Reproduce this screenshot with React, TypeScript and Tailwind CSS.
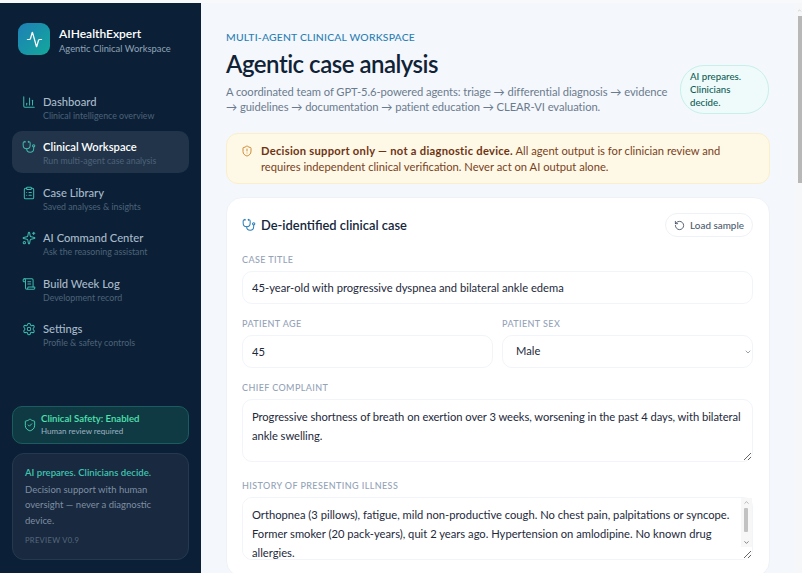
import React from "react";
import { Activity, BarChart3, Stethoscope, ClipboardList, Sparkles, ScrollText, Settings, ShieldCheck, ShieldAlert, RotateCcw, ChevronDown, ChevronUp } from "lucide-react";

const nav = [
  { icon: BarChart3, title: "Dashboard", sub: "Clinical intelligence overview" },
  { icon: Stethoscope, title: "Clinical Workspace", sub: "Run multi-agent case analysis", active: true },
  { icon: ClipboardList, title: "Case Library", sub: "Saved analyses & insights" },
  { icon: Sparkles, title: "AI Command Center", sub: "Ask the reasoning assistant" },
  { icon: ScrollText, title: "Build Week Log", sub: "Development record" },
  { icon: Settings, title: "Settings", sub: "Profile & safety controls" },
];

const labelCls = "block text-[9px] leading-[12px] tracking-[0.4px] uppercase font-medium text-[#94a3b8] mb-[5px]";
const fieldCls = "w-full bg-white border border-[#f1f5f9] rounded-[10px] px-[9px] text-[#1e293b] text-[11.2px] outline-none";

export default function App() {
  return (
    <div className="h-[573px] w-[802px] flex flex-col overflow-hidden bg-[#f4f7fb] font-['Lato','Noto_Sans',sans-serif]">
      <div className="h-[3px] bg-[#f8f9fa] shrink-0" />
      <div className="flex flex-1 min-h-0">
        <aside className="w-[201px] shrink-0 bg-[#0b2036] flex flex-col px-[12px] pb-[13px]">
          <div className="flex items-center gap-[9px] px-[6px] pt-[19px]">
            <div className="w-[32px] h-[32px] rounded-[9px] bg-gradient-to-br from-[#1f7fb5] to-[#14a89a] flex items-center justify-center">
              <Activity size={17} strokeWidth={1.75} className="text-white" />
            </div>
            <div className="pt-[4px]">
              <div className="text-white text-[12px] leading-[16px] font-semibold">AIHealthExpert</div>
              <div className="text-[#8fa3b8] text-[9.4px] leading-[14px] mt-[0px]">Agentic Clinical Workspace</div>
            </div>
          </div>
          <nav className="mt-[30px] flex flex-col gap-[3.4px]">
            {nav.map((n) => (
              <div key={n.title} className={`flex gap-[7px] rounded-[10px] pl-[10px] h-[42px] pt-[8px] ${n.active ? "bg-[#223449]" : ""}`}>
                <n.icon size={14} strokeWidth={1.75} className="text-[#3db8ac] mt-[1px] shrink-0" />
                <div>
                  <div className={`text-[11.2px] leading-[15px] ${n.active ? "text-white font-semibold" : "text-[#a9bacb] font-medium"}`}>{n.title}</div>
                  <div className="text-[8.8px] leading-[12px] mt-[1px] text-[#4d6379]">{n.sub}</div>
                </div>
              </div>
            ))}
          </nav>
          <div className="mt-auto flex flex-col gap-[9px]">
            <div className="h-[38px] rounded-[10px] border border-[#1a5c60] bg-[#0f3a44] flex items-center gap-[4px] px-[10px]">
              <ShieldCheck size={14} strokeWidth={1.6} className="text-[#4ad6b5] shrink-0" />
              <div>
                <div className="text-[9.6px] leading-[13px] font-semibold text-[#4fe3b0]">Clinical Safety: Enabled</div>
                <div className="text-[8px] leading-[11px] mt-[1px] text-[#9fb2c2]">Human review required</div>
              </div>
            </div>
            <div className="rounded-[12px] border border-[#24384f] bg-[#19293f] px-[12px] pt-[12px] pb-[13px]">
              <div className="text-[9.6px] leading-[14px] font-semibold text-[#3fc4b0]">AI prepares. Clinicians decide.</div>
              <div className="text-[9.5px] leading-[15.5px] mt-[2px] text-[#7d8fa3]">Decision support with human oversight — never a diagnostic device.</div>
              <div className="text-[7.6px] leading-[12px] mt-[6px] tracking-[0.3px] text-[#56687d]">PREVIEW V0.9</div>
            </div>
          </div>
        </aside>

        <div className="relative flex-1 min-w-0 overflow-hidden">
          <main className="pl-[25px] pr-[32px] pt-[27px]">
            <div className="flex items-end gap-[6px]">
              <div className="flex-1 min-w-0">
                <div className="text-[10.4px] leading-[15px] tracking-[0.2px] uppercase font-medium text-[#2b7fb5]">Multi-agent clinical workspace</div>
                <h1 className="text-[24px] leading-[32px] mt-[3px] font-semibold tracking-[-0.5px] text-[#0f2236]">Agentic case analysis</h1>
                <p className="text-[11.2px] leading-[15px] mt-[4px] tracking-[-0.07px] text-[#6b7b8f]">A coordinated team of GPT-5.6-powered agents: triage → differential diagnosis → evidence → guidelines → documentation → patient education → CLEAR-VI evaluation.</p>
              </div>
              <div className="w-[89px] mr-[1px] shrink-0 rounded-[24px] border border-[#c7f0ea] bg-[#eefbfa] pl-[9px] pr-[14px] py-[4px] text-[9.7px] leading-[13px] font-medium text-[#0f5d56]">AI prepares. Clinicians decide.</div>
            </div>

            <div className="mt-[19px] rounded-[12px] border border-[#fbeecb] bg-[#fef9e7] flex gap-[8px] px-[14px] py-[9px]">
              <ShieldAlert size={12} strokeWidth={1.75} className="text-[#c77a1c] mt-[2px] shrink-0" />
              <p className="text-[11.2px] leading-[15.5px] text-[#7a3f1a]"><b className="font-bold tracking-[0.27px] text-[#6f3312]">Decision support only — not a diagnostic device.</b> All agent output is for clinician review and requires independent clinical verification. Never act on AI output alone.</p>
            </div>

            <section className="mt-[13px] rounded-[16px] border border-[#eef2f7] bg-white pl-[15px] pr-[16px] pt-[15px] pb-[16px]">
              <div className="flex items-center justify-between">
                <div className="flex items-center gap-[5px]">
                  <Stethoscope size={14} strokeWidth={1.75} className="text-[#2b7fb5]" />
                  <h2 className="text-[12.9px] leading-[18px] font-semibold text-[#13263b]">De-identified clinical case</h2>
                </div>
                <button className="h-[24px] rounded-full border border-[#eef2f7] bg-white flex items-center gap-[5px] px-[8px] text-[9.9px] font-medium text-[#4b5b6e]">
                  <RotateCcw size={11} strokeWidth={1.75} className="text-[#334155]" />Load sample
                </button>
              </div>
              <div className="mt-[17px]">
                <label className={labelCls}>Case title</label>
                <input readOnly value="45-year-old with progressive dyspnea and bilateral ankle edema" className={`${fieldCls} h-[33px]`} />
              </div>
              <div className="mt-[14px] grid grid-cols-2 gap-[9px]">
                <div>
                  <label className={labelCls}>Patient age</label>
                  <input readOnly value="45" className={`${fieldCls} h-[33px]`} />
                </div>
                <div>
                  <label className={labelCls}>Patient sex</label>
                  <div className="relative">
                    <select className={`${fieldCls} h-[33px] appearance-none pl-[13px]`} defaultValue="Male"><option>Male</option><option>Female</option></select>
                    <ChevronDown size={8} strokeWidth={2} className="absolute right-[1px] top-[13px] text-[#64748b]" />
                  </div>
                </div>
              </div>
              <div className="mt-[14px]">
                <label className={labelCls}>Chief complaint</label>
                <textarea readOnly rows={2} className={`${fieldCls} block h-[63px] py-[7px] leading-[19px] tracking-[-0.05px]`} value="Progressive shortness of breath on exertion over 3 weeks, worsening in the past 4 days, with bilateral ankle swelling." />
              </div>
              <div className="mt-[18px]">
                <label className={labelCls}>History of presenting illness</label>
                <div className="relative">
                  <textarea readOnly className={`${fieldCls} block h-[63px] py-[7px] pr-[20px] leading-[19px]`} value="Orthopnea (3 pillows), fatigue, mild non-productive cough. No chest pain, palpitations or syncope. Former smoker (20 pack-years), quit 2 years ago. Hypertension on amlodipine. No known drug allergies." />
                  <div className="absolute right-[1px] top-[1px] h-[49px] w-[11px] bg-[#f7f7f7]">
                    <ChevronUp size={7} strokeWidth={2} className="absolute left-[2px] top-[1px] text-[#8a8a8a]" />
                    <div className="absolute left-[3px] top-[10px] h-[24px] w-[4px] rounded-[1px] bg-[#c2c2c2]" />
                    <ChevronDown size={7} strokeWidth={2.5} className="absolute left-[2px] top-[41px] text-[#555]" />
                  </div>
                </div>
              </div>
            </section>
          </main>
          <div className="absolute right-0 top-0 bottom-0 w-[7px] bg-[#f6f7f8]">
            <ChevronUp size={5} strokeWidth={2} className="absolute right-0 top-[5px] text-[#a0a0a0]" />
            <div className="absolute right-0 top-[13px] h-[167px] w-[4px] bg-[#b8b8b8]" />
          </div>
        </div>
      </div>
    </div>
  );
}
